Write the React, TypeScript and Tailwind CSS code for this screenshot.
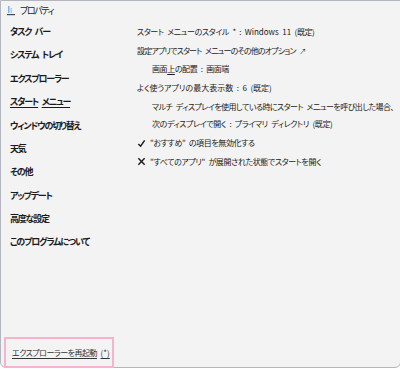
import React from "react";

const font = "font-['Noto_Sans_CJK_JP','Noto_Sans',sans-serif]";

// a visible word gap (palt makes plain spaces very narrow)
const S = () => <span className="inline-block w-[3.5px]" />;
const L = ({ children }: { children: React.ReactNode }) => (
  <span className="tracking-[0px]">{children}</span>
);

const nav: { label: React.ReactNode; key: string; active?: boolean }[] = [
  { key: "taskbar", label: <>タスク<S />バー</> },
  { key: "tray", label: <>システム<S />トレイ</> },
  { key: "explorer", label: "エクスプローラー" },
  { key: "start", label: <>スタート<S />メニュー</>, active: true },
  { key: "switch", label: "ウィンドウの切り替え" },
  { key: "weather", label: "天気" },
  { key: "other", label: "その他" },
  { key: "update", label: "アップデート" },
  { key: "advanced", label: "高度な設定" },
  { key: "about", label: "このプログラムについて" },
];

function Check() {
  return (
    <svg width="9" height="9" viewBox="0 0 10 10" className="shrink-0">
      <path d="M1.5 5.5 L4 8 L8.5 1.5" fill="none" stroke="#1a1a1a" strokeWidth="1.6" />
    </svg>
  );
}

function Cross() {
  return (
    <svg width="9" height="9" viewBox="0 0 10 10" className="shrink-0">
      <path d="M1.5 1.5 L8.5 8.5 M8.5 1.5 L1.5 8.5" fill="none" stroke="#1a1a1a" strokeWidth="1.6" />
    </svg>
  );
}

export default function App() {
  return (
    <div className={`h-[369px] w-[400px] overflow-hidden bg-white ${font} text-[#1a1a1a] [font-feature-settings:'palt']`}>
      <div className="relative flex h-[368px] w-[401px] flex-col rounded-b-[6px] border border-[#b4b6bf] bg-[#f3f3f3]">
        {/* title bar */}
        <div className="flex h-[19px] items-center gap-[4px] pl-[5px]">
          <svg width="10" height="11" viewBox="0 0 10 11">
            <rect x="2" y="1" width="1.5" height="7" fill="#7fb3e6" />
            <rect x="4.5" y="3" width="1.5" height="5" fill="#a9cdf0" />
            <rect x="1" y="9" width="8" height="1.2" fill="#3a4a5a" />
          </svg>
          <span className="text-[9px] tracking-[-1.4px]">プロパティ</span>
        </div>

        <div className="flex flex-1">
          {/* nav */}
          <nav className="flex w-[127px] shrink-0 flex-col pl-[9px]">
            {nav.map((n) => (
              <div
                key={n.key}
                className="flex h-[23.4px] items-center whitespace-nowrap text-[9px] font-bold tracking-[-1.2px]"
              >
                <span className={n.active ? "underline underline-offset-[2px]" : ""}>{n.label}</span>
              </div>
            ))}
          </nav>

          {/* content */}
          <div className="flex flex-col whitespace-nowrap pt-[3px] pl-[9px] text-[8px] tracking-[-0.4px]">
            <div className="h-[18.7px] leading-[18.7px]">
              スタート<S />メニューのスタイル<S />*<S />:<S /><L>Windows</L><S /><L>11</L><S />(既定)
            </div>
            <div className="h-[18.7px] leading-[18.7px] tracking-[-0.85px]">
              設定アプリでスタート<S />メニューのその他のオプション<S /><span className="text-[7px]">↗</span>
            </div>
            <div className="h-[18.7px] pl-[15px] leading-[18.7px]">
              画面<span className="underline underline-offset-[2px]">上</span>の配置<S />:<S />画面端
            </div>
            <div className="h-[18.7px] leading-[18.7px] tracking-[0px]">
              よく使うアプリの最大表示数<S />:<S /><L>6</L><S />(既定)
            </div>
            <div className="py-[1.6px] pl-[15px] leading-[16.5px]">
              <div className="tracking-[-0.55px]">
                マルチ<S />ディスプレイを使用している時にスタート<S />メニューを呼び出した場合、
              </div>
              <div>
                次のディスプレイで開く<S />:<S />プライマリ<S />ディレクトリ<S />(既定)
              </div>
            </div>
            <div className="flex h-[18.7px] items-center gap-[4px]">
              <Check />
              <span>"おすすめ"<S />の項目を無効化する</span>
            </div>
            <div className="flex h-[18.7px] items-center gap-[4px]">
              <Cross />
              <span>"すべてのアプリ"<S />が展開された状態でスタートを開く</span>
            </div>
          </div>
        </div>

        {/* restart */}
        <div className="absolute bottom-[-1px] left-[3px] flex h-[31px] w-[110px] items-center border-2 border-[#f5b3cc] pl-[6px]">
          <span className="whitespace-nowrap text-[8px] tracking-[-0.5px] text-[#333] underline underline-offset-[2px]">
            エクスプローラーを再起動<S /><span className="tracking-[0px]">(*)</span>
          </span>
        </div>
      </div>
    </div>
  );
}
